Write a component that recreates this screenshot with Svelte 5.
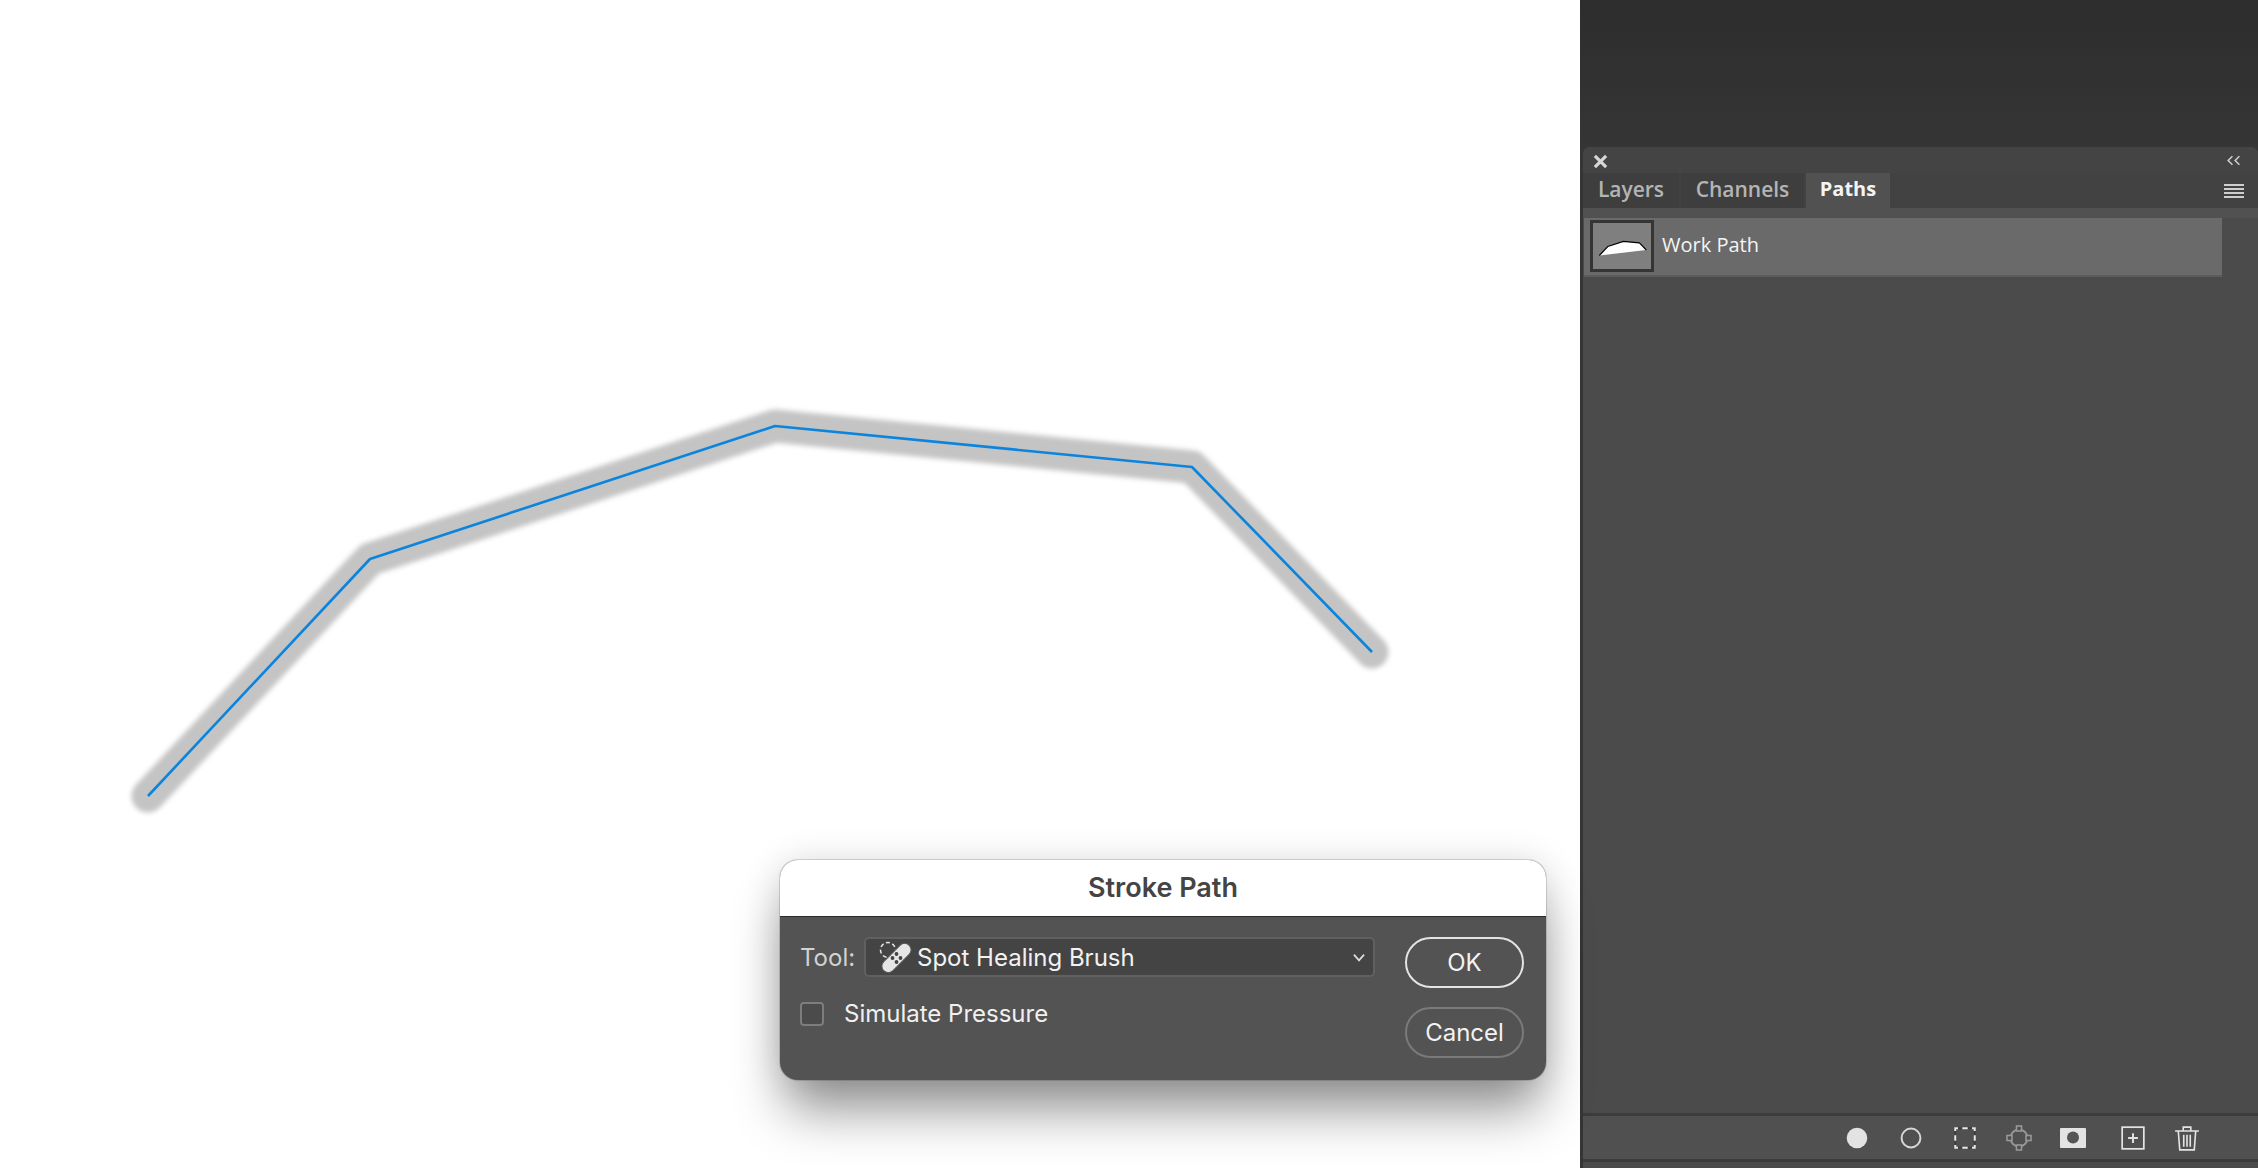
<script>
  const tabs = [
    { name: 'Layers', active: false },
    { name: 'Channels', active: false },
    { name: 'Paths', active: true }
  ];
  const strokePoints = '148,796 370,559 775,426 1192,467 1372,652';
</script>

<div class="app">
  <main class="canvas">
    <svg class="drawing" viewBox="0 0 1580 1168" aria-hidden="true">
      <polyline class="halo" points={strokePoints} />
      <polyline class="line" points={strokePoints} />
    </svg>

    <section class="dialog">
      <h1 class="title">Stroke Path</h1>
      <div class="body">
        <div class="fields">
          <div class="tool-row">
            <span class="tool-label">Tool:</span>
            <div class="select">
              <svg class="tool-icon" viewBox="0 0 34 34" aria-hidden="true">
                <circle cx="9" cy="10" r="7.5" fill="none" stroke="#e6e6e6" stroke-width="1.5" stroke-dasharray="4 2.6" />
                <rect x="-6.5" y="-18" width="13" height="36" rx="6.5" transform="translate(17.5 18) rotate(45)" fill="#e6e6e6" stroke="#535353" stroke-width="1" />
                <g fill="#444">
                  <circle cx="17.5" cy="14" r="1.9" />
                  <circle cx="21.5" cy="18" r="1.9" />
                  <circle cx="13.5" cy="18" r="1.9" />
                  <circle cx="17.5" cy="22" r="1.9" />
                </g>
              </svg>
              <span class="tool-name">Spot Healing Brush</span>
              <svg class="chevron" viewBox="0 0 12 8" aria-hidden="true">
                <path d="M1.5 1.5 6 6.5l4.5-5" fill="none" stroke="#dcdcdc" stroke-width="1.6" />
              </svg>
            </div>
          </div>
          <label class="check-row">
            <span class="checkbox"></span>
            <span>Simulate Pressure</span>
          </label>
        </div>
        <div class="actions">
          <button class="btn primary">OK</button>
          <button class="btn">Cancel</button>
        </div>
      </div>
    </section>
  </main>

  <aside class="side">
    <div class="panel">
      <div class="panel-head">
        <svg class="close" viewBox="0 0 12 12" aria-hidden="true">
          <path d="M1.5 1.5l9 9M10.5 1.5l-9 9" stroke="#d6d6d6" stroke-width="2.6" />
        </svg>
        <svg class="collapse" viewBox="0 0 14 10" aria-hidden="true">
          <path d="M6 1 2 5l4 4M12.5 1l-4 4 4 4" fill="none" stroke="#cfcfcf" stroke-width="1.4" />
        </svg>
      </div>
      <div class="tabs">
        {#each tabs as tab}
          <div class="tab" class:active={tab.active}>{tab.name}</div>
        {/each}
        <div class="menu">
          <span></span><span></span><span></span><span></span>
        </div>
      </div>
      <div class="list">
        <div class="path-row">
          <div class="thumb">
            <svg viewBox="0 0 58 45" aria-hidden="true">
              <polygon points="6.3,32 14.8,23 30.4,17.9 46.4,19.4 53.3,26.5" fill="#fff" />
              <polyline points="6.3,32 14.8,23 30.4,17.9 46.4,19.4 53.3,26.5" fill="none" stroke="#000" stroke-width="1.1" />
            </svg>
          </div>
          <span class="path-name">Work Path</span>
        </div>
      </div>
      <div class="foot">
        <svg viewBox="0 0 24 24" aria-hidden="true"><circle cx="12" cy="12" r="9.5" fill="#e3e3e3" /></svg>
        <svg viewBox="0 0 24 24" aria-hidden="true"><circle cx="12" cy="12" r="8.7" fill="none" stroke="#d8d8d8" stroke-width="1.8" /></svg>
        <svg viewBox="0 0 24 24" aria-hidden="true">
          <rect x="3" y="3" width="18" height="18" fill="none" stroke="#3e3e3e" stroke-width="1.8" />
          <rect x="3" y="3" width="18" height="18" fill="none" stroke="#e8e8e8" stroke-width="1.8" stroke-dasharray="5 4" stroke-dashoffset="2.5" />
        </svg>
        <svg viewBox="0 0 26 26" aria-hidden="true">
          <circle cx="13" cy="13" r="8.5" fill="none" stroke="#989898" stroke-width="1.8" />
          <g fill="#4d4d4d" stroke="#989898" stroke-width="1.6">
            <rect x="10.5" y="1" width="5" height="5" />
            <rect x="10.5" y="20" width="5" height="5" />
            <rect x="1" y="10.5" width="5" height="5" />
            <rect x="20" y="10.5" width="5" height="5" />
          </g>
        </svg>
        <svg class="wide" viewBox="0 0 26 20" aria-hidden="true">
          <rect width="26" height="20" rx="1" fill="#e3e3e3" />
          <circle cx="13" cy="9.5" r="6" fill="#555" />
        </svg>
        <svg class="new" viewBox="0 0 24 24" aria-hidden="true">
          <rect x="2" y="2" width="20" height="20" fill="none" stroke="#e3e3e3" stroke-width="1.6" />
          <path d="M12 7.5v9M7.5 12h9" stroke="#e3e3e3" stroke-width="1.8" />
        </svg>
        <svg viewBox="0 0 24 24" aria-hidden="true">
          <path d="M1 5.5h22M8.5 5V2h7v3M4 6l1.3 17h13.4L20 6M9 9v11M12 9v11M15 9v11" fill="none" stroke="#e3e3e3" stroke-width="1.5" />
        </svg>
      </div>
    </div>
  </aside>
</div>

<style>
  :global(body) {
    background: #fff;
  }
  .app {
    display: flex;
    width: 2258px;
    height: 1168px;
    overflow: hidden;
  }
  .canvas {
    position: relative;
    width: 1580px;
    flex: none;
    background: #fff;
  }
  .drawing {
    position: absolute;
    inset: 0;
    width: 1580px;
    height: 1168px;
  }
  .drawing polyline {
    fill: none;
    stroke-linejoin: round;
  }
  .drawing .halo {
    stroke: #c4c4c4;
    stroke-width: 33px;
    stroke-linecap: round;
    filter: blur(2.5px);
  }
  .drawing .line {
    stroke: #0b84dd;
    stroke-width: 2.6px;
  }
  .dialog {
    position: absolute;
    left: 780px;
    top: 860px;
    width: 766px;
    height: 220px;
    display: flex;
    flex-direction: column;
    border-radius: 18px;
    overflow: hidden;
    box-sizing: border-box;
    background: #535353;
    font-family: Inter, "Liberation Sans", sans-serif;
    box-shadow: 0 36px 52px -6px rgba(0, 0, 0, 0.42), 0 0 36px rgba(0, 0, 0, 0.12), 0 0 0 1px rgba(0, 0, 0, 0.14);
  }
  .title {
    flex: none;
    height: 57px;
    box-sizing: border-box;
    margin: 0;
    border-bottom: 1px solid #2c2c2c;
    background: #fff;
    color: #444;
    font-size: 27px;
    font-weight: 600;
    line-height: 55px;
    text-align: center;
  }
  .body {
    flex: 1;
    display: flex;
    gap: 30px;
    padding: 20px 22px 0 20px;
  }
  .fields {
    flex: 1;
    display: flex;
    flex-direction: column;
    gap: 22px;
  }
  .tool-row {
    display: flex;
    align-items: center;
    gap: 11px;
    color: #d2d2d2;
    font-size: 24px;
  }
  .tool-label {
    width: 53px;
    white-space: nowrap;
  }
  .select {
    flex: 1;
    height: 40px;
    display: flex;
    align-items: center;
    box-sizing: border-box;
    padding: 0 7px 0 13px;
    border: 2px solid #606060;
    border-radius: 5px;
    background: #444;
    color: #f2f2f2;
  }
  .tool-icon {
    width: 34px;
    height: 34px;
    flex: none;
    margin-right: 4px;
  }
  .tool-name {
    flex: 1;
    white-space: nowrap;
  }
  .chevron {
    width: 14px;
    height: 9px;
  }
  .check-row {
    display: flex;
    align-items: center;
    gap: 20px;
    color: #f0f0f0;
    font-size: 24px;
  }
  .checkbox {
    width: 24px;
    height: 24px;
    box-sizing: border-box;
    border: 2px solid #7d7d7d;
    border-radius: 4px;
    background: #4b4b4b;
  }
  .actions {
    width: 119px;
    display: flex;
    flex-direction: column;
    gap: 19px;
  }
  .btn {
    height: 51px;
    padding: 0;
    box-sizing: border-box;
    border: 2px solid #7a7a7a;
    border-radius: 26px;
    background: transparent;
    color: #f2f2f2;
    font: inherit;
    font-size: 24px;
  }
  .btn.primary {
    border-color: #e4e4e4;
  }
  .side {
    flex: 1;
    display: flex;
    flex-direction: column;
    padding-top: 147px;
    background: linear-gradient(#2d2d2d, #353535 147px);
  }
  .panel {
    flex: 1;
    display: flex;
    flex-direction: column;
    margin-left: 3px;
    border-radius: 7px 7px 0 0;
    background: #4b4b4b;
    font-family: "Open Sans", "Noto Sans", sans-serif;
    overflow: hidden;
  }
  .panel-head {
    flex: none;
    height: 26px;
    display: flex;
    align-items: center;
    justify-content: space-between;
    padding: 0 17px 0 10px;
    background: #444;
  }
  .close {
    width: 15px;
    height: 15px;
    margin-top: 3px;
  }
  .collapse {
    width: 15px;
    height: 11px;
  }
  .tabs {
    flex: none;
    height: 35px;
    display: flex;
    align-items: stretch;
    gap: 2px;
    background: #424242;
  }
  .tab {
    display: flex;
    align-items: center;
    justify-content: center;
    padding-bottom: 4px;
    background: #3e3e3e;
    color: #b4b4b4;
    font-size: 21px;
    font-weight: 600;
  }
  .tab:nth-child(1) {
    width: 96px;
  }
  .tab:nth-child(2) {
    width: 123px;
  }
  .tab:nth-child(3) {
    width: 84px;
  }
  .tab.active {
    background: #515151;
    color: #f4f4f4;
    font-size: 20px;
    font-weight: 700;
  }
  .menu {
    margin-left: auto;
    display: flex;
    flex-direction: column;
    justify-content: center;
    gap: 2px;
    width: 20px;
    padding-right: 14px;
  }
  .menu span {
    height: 2px;
    background: #cfcfcf;
  }
  .list {
    flex: 1;
    padding: 10px 36px 0 1px;
    background: linear-gradient(#515151 10px, #4b4b4b 10px);
  }
  .path-row {
    height: 59px;
    display: flex;
    align-items: center;
    gap: 8px;
    padding-left: 6px;
    padding-bottom: 2px;
    box-sizing: border-box;
    background: #6a6a6a;
    border-bottom: 2px solid #5c5c5c;
    color: #f4f4f4;
    font-size: 20px;
  }
  .path-name {
    margin-top: -3px;
  }
  .thumb {
    width: 64px;
    height: 52px;
    box-sizing: border-box;
    border: 3px solid #353535;
    background: #7f7f7f;
  }
  .thumb svg {
    display: block;
    width: 100%;
    height: 100%;
  }
  .foot {
    flex: none;
    height: 49px;
    margin-bottom: 6px;
    display: flex;
    align-items: center;
    justify-content: flex-end;
    gap: 28px;
    padding-right: 58px;
    box-sizing: border-box;
    border-top: 3px solid #3c3c3c;
    border-bottom: 3px solid #3c3c3c;
    background: #505050;
  }
  .foot svg {
    width: 26px;
    height: 26px;
    flex: none;
  }
  .foot .new {
    margin-left: 6px;
  }
</style>
